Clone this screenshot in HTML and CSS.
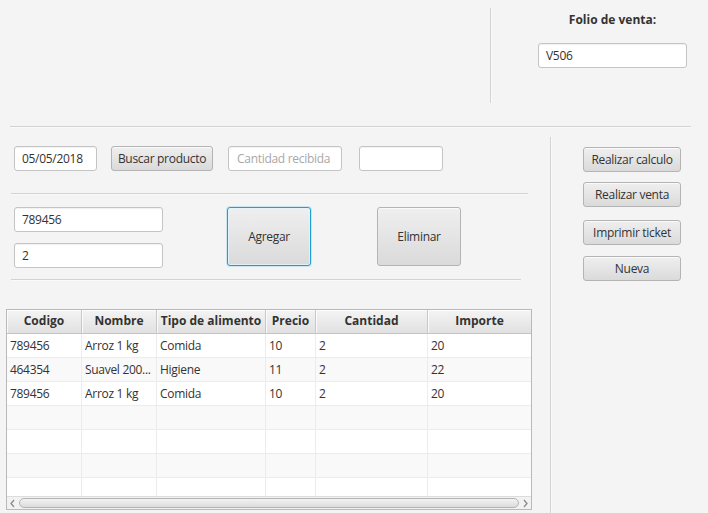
FILE: index.html
```html
<!DOCTYPE html>
<html>
<head>
<meta charset="utf-8">
<link rel="stylesheet" href="styles.css">
</head>
<body>
<div class="app">
  <div class="top">
    <div class="top-left"></div>
    <div class="vsep vsep-top"></div>
    <div class="folio">
      <div class="folio-label">Folio de venta:</div>
      <div class="field folio-field">V506</div>
    </div>
  </div>
  <div class="hsep hsep-top"></div>
  <div class="main">
    <div class="left">
      <div class="row1">
        <div class="field f-date">05/05/2018</div>
        <div class="btn b-buscar">Buscar producto</div>
        <div class="field f-cant placeholder">Cantidad recibida</div>
        <div class="field f-blank"></div>
      </div>
      <div class="hsep hsep-1"></div>
      <div class="row2">
        <div class="fields">
          <div class="field f-code">789456</div>
          <div class="field f-qty">2</div>
        </div>
        <div class="btn big b-agregar focused">Agregar</div>
        <div class="btn big b-elim">Eliminar</div>
      </div>
      <div class="hsep hsep-2"></div>
      <div class="table">
        <div class="thead">
          <div class="th">Codigo</div>
          <div class="th">Nombre</div>
          <div class="th">Tipo de alimento</div>
          <div class="th">Precio</div>
          <div class="th">Cantidad</div>
          <div class="th">Importe</div>
        </div>
        <div class="tbody">
          <div class="tr">
            <div class="td">789456</div><div class="td">Arroz 1 kg</div><div class="td">Comida</div><div class="td">10</div><div class="td">2</div><div class="td">20</div>
          </div>
          <div class="tr odd">
            <div class="td">464354</div><div class="td">Suavel 200...</div><div class="td">Higiene</div><div class="td">11</div><div class="td">2</div><div class="td">22</div>
          </div>
          <div class="tr">
            <div class="td">789456</div><div class="td">Arroz 1 kg</div><div class="td">Comida</div><div class="td">10</div><div class="td">2</div><div class="td">20</div>
          </div>
          <div class="tr odd">
            <div class="td"></div><div class="td"></div><div class="td"></div><div class="td"></div><div class="td"></div><div class="td"></div>
          </div>
          <div class="tr">
            <div class="td"></div><div class="td"></div><div class="td"></div><div class="td"></div><div class="td"></div><div class="td"></div>
          </div>
          <div class="tr odd">
            <div class="td"></div><div class="td"></div><div class="td"></div><div class="td"></div><div class="td"></div><div class="td"></div>
          </div>
          <div class="tr">
            <div class="td"></div><div class="td"></div><div class="td"></div><div class="td"></div><div class="td"></div><div class="td"></div>
          </div>
        </div>
        <div class="hscroll">
          <svg class="arrow" width="11" height="13" viewBox="0 0 11 13"><polyline points="7,3 4,6.5 7,10" fill="none" stroke="#8a8a8a" stroke-width="1.3"/></svg>
          <div class="thumb"></div>
          <svg class="arrow" width="11" height="13" viewBox="0 0 11 13"><polyline points="4,3 7,6.5 4,10" fill="none" stroke="#8a8a8a" stroke-width="1.3"/></svg>
        </div>
      </div>
    </div>
    <div class="vsep vsep-main"></div>
    <div class="right">
      <div class="btn rbtn r1">Realizar calculo</div>
      <div class="btn rbtn r2">Realizar venta</div>
      <div class="btn rbtn r3">Imprimir ticket</div>
      <div class="btn rbtn r4">Nueva</div>
    </div>
  </div>
</div>
</body>
</html>
```

FILE: styles.css
```css
* { box-sizing: border-box; }
html, body {
  margin: 0;
  padding: 0;
  background: #f4f4f4;
}
body {
  font-family: "Open Sans", "Noto Sans", sans-serif;
  font-size: 12px;
  color: #333333;
  letter-spacing: -0.3px;
}
.app {
  width: 708px;
  height: 513px;
  overflow: hidden;
}

/* separators */
.vsep {
  width: 2px;
  border-left: 1px solid #d2d2d2;
  border-right: 1px solid #fafafa;
}
.hsep {
  height: 2px;
  border-top: 1px solid #d2d2d2;
  border-bottom: 1px solid #fafafa;
}

/* top */
.top {
  display: flex;
  height: 126px;
}
.top-left { width: 490px; }
.vsep-top {
  margin-top: 8px;
  height: 95px;
}
.folio {
  display: flex;
  flex-direction: column;
  padding: 10px 0 0 46px;
}
.folio-label {
  width: 149px;
  height: 19px;
  line-height: 19px;
  text-align: center;
  font-weight: bold;
  letter-spacing: 0;
  color: #333;
}
.folio-field {
  margin-top: 14px;
  width: 149px;
  height: 24px;
}
.hsep-top {
  margin-left: 10px;
  width: 681px;
}

/* fields & buttons */
.field {
  height: 25px;
  line-height: 23px;
  padding: 0 7px;
  background: #ffffff;
  border: 1px solid #c4c4c4;
  border-radius: 3px;
  box-shadow: inset 0 1px 1px rgba(0,0,0,0.06);
  white-space: nowrap;
  overflow: hidden;
}
.placeholder { color: #a8a8a8; padding-left: 8px; }
.btn {
  height: 25px;
  line-height: 23px;
  text-align: center;
  white-space: nowrap;
  border: 1px solid #b4b4b4;
  border-radius: 3px;
  background: linear-gradient(#efefef, #dadada);
  box-shadow: inset 0 1px 0 rgba(255,255,255,0.7);
  color: #333;
}

/* main */
.main {
  display: flex;
  height: 385px;
}
.left {
  width: 550px;
  padding-top: 18px;
}
.row1 {
  display: flex;
  padding-left: 14px;
}
.f-date { width: 83px; margin-right: 14px; }
.b-buscar { width: 102px; margin-right: 15px; }
.f-cant { width: 114px; margin-right: 17px; }
.f-blank { width: 84px; }

.hsep-1 {
  margin-top: 22px;
  margin-left: 11px;
  width: 517px;
}
.row2 {
  display: flex;
  margin-top: 12px;
  padding-left: 14px;
}
.fields {
  display: flex;
  flex-direction: column;
  gap: 11px;
  width: 149px;
}
.big {
  width: 84px;
  height: 59px;
  line-height: 57px;
}
.b-agregar { margin-left: 64px; }
.b-elim { margin-left: 66px; }
.focused {
  border-color: #1c9fd4;
  box-shadow: 0 0 0 1px rgba(28,159,212,0.18), inset 0 0 0 1px rgba(230,244,250,0.8);
}
.hsep-2 {
  margin-top: 11px;
  margin-left: 11px;
  width: 510px;
}

/* table */
.table {
  margin-top: 28px;
  margin-left: 6px;
  width: 526px;
  height: 201px;
  border: 1px solid #b9b9b9;
  background: #ffffff;
  display: flex;
  flex-direction: column;
}
.thead, .tr {
  display: grid;
  grid-template-columns: 75px 75px 109px 50px 112px 103px;
}
.thead {
  height: 24px;
  background: linear-gradient(#f4f4f4, #e0e0e0);
}
.th {
  height: 24px;
  line-height: 22px;
  text-align: center;
  font-weight: bold;
  letter-spacing: 0;
  border-right: 1px solid #c8c8c8;
  border-bottom: 1px solid #c3c3c3;
  box-shadow: inset 1px 1px 0 rgba(255,255,255,0.8);
  white-space: nowrap;
  overflow: hidden;
}
.th:last-child { border-right: none; }
.tbody {
  height: 162px;
  overflow: hidden;
}
.tr { height: 24px; background: #ffffff; }
.tr.odd { background: #f9f9f9; }
.td {
  height: 24px;
  line-height: 23px;
  padding-left: 3px;
  border-right: 1px solid #ececec;
  border-bottom: 1px solid #ececec;
  white-space: nowrap;
  overflow: hidden;
}
.td:last-child { border-right: none; }
.hscroll {
  height: 13px;
  display: flex;
  align-items: center;
  background: #f2f2f2;
  border-top: 1px solid #dcdcdc;
}
.arrow { flex: none; display: block; }
.thumb {
  flex: 1;
  height: 10px;
  margin: 0 1px;
  border: 1px solid #b3b3b3;
  border-radius: 5px;
  background: linear-gradient(#f2f2f2, #dcdcdc);
}

/* right column */
.vsep-main {
  margin-top: 9px;
  height: 376px;
}
.right {
  display: flex;
  flex-direction: column;
  padding-left: 31px;
  padding-top: 19px;
}
.rbtn { width: 98px; }
.r2 { margin-top: 10px; }
.r3 { margin-top: 13px; }
.r4 { margin-top: 11px; }
```
